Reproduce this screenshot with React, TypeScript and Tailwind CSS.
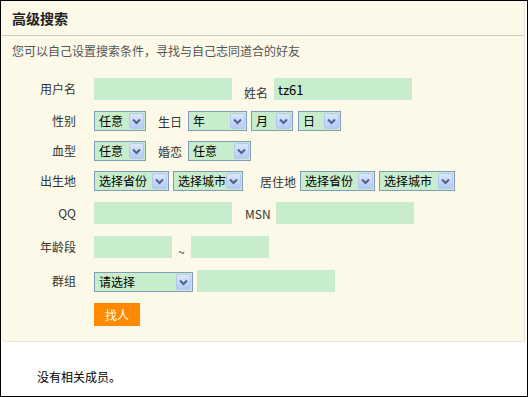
import React from "react";

const FONT = { fontFamily: '"Noto Sans CJK SC", "Liberation Sans", sans-serif' };

function Arrow() {
  return (
    <div className="w-[15px] h-[16px] mr-[1px] rounded-[2px] border border-[#b7c8ef] bg-gradient-to-b from-[#dbe6fd] to-[#b6caf5] flex items-center justify-center">
      <svg width="9" height="7" viewBox="0 0 9 7">
        <path d="M1 1.5 L4.5 5 L8 1.5" fill="none" stroke="#4d6185" strokeWidth="2" />
      </svg>
    </div>
  );
}

function Select({ label, w }: { label: string; w: string }) {
  return (
    <div className={`${w} h-[20px] border border-[#7f9db9] bg-[#c7edcc] flex items-center`}>
      <span className="flex-1 pl-[4px] text-[12px] leading-none text-black whitespace-nowrap">{label}</span>
      <Arrow />
    </div>
  );
}

function Field({ w, value }: { w: string; value?: string }) {
  return (
    <div className={`${w} h-[22px] bg-[#c7edcc] flex items-center pl-[4px] text-[13px] leading-none text-black`}>
      {value}
    </div>
  );
}

function Row({ label, cls, children }: { label: string; cls: string; children: React.ReactNode }) {
  return (
    <div className={`flex items-center ${cls}`}>
      <div className="w-[75px] text-right text-[12px] leading-none text-[#333]">{label}</div>
      <div className="ml-[18px] flex items-center h-full">{children}</div>
    </div>
  );
}

export default function App() {
  return (
    <div style={FONT} className="w-[528px] h-[397px] border border-black bg-white overflow-hidden">
      <div className="w-[524px] h-[341px] bg-[#fcf9e8] border-r border-b border-[#e8e4d0] rounded-bl-[6px] flex flex-col">
        <div className="h-[35px] shrink-0 border-b border-[#cfcbbb] pl-[11px] flex items-center">
          <span className="text-[14px] leading-none font-bold text-[#222]">高级搜索</span>
        </div>
        <div className="h-[42px] shrink-0 pl-[11px] pt-[9px] text-[12px] leading-none text-[#555]">
          您可以自己设置搜索条件，寻找与自己志同道合的好友
        </div>

        <Row label="用户名" cls="h-[22px] shrink-0">
          <Field w="w-[138px]" />
          <span className="ml-[12px] mr-[6px] text-[12px] leading-none text-[#333] mt-[7px]">姓名</span>
          <Field w="w-[138px]" value="tz61" />
        </Row>

        <Row label="性别" cls="h-[20px] mt-[11px] shrink-0">
          <Select label="任意" w="w-[52px]" />
          <span className="ml-[12px] mr-[6px] text-[12px] leading-none text-[#333] mt-[2px]">生日</span>
          <Select label="年" w="w-[59px]" />
          <div className="ml-[4px]"><Select label="月" w="w-[42px]" /></div>
          <div className="ml-[5px]"><Select label="日" w="w-[43px]" /></div>
        </Row>

        <Row label="血型" cls="h-[20px] mt-[10px] shrink-0">
          <Select label="任意" w="w-[52px]" />
          <span className="ml-[12px] mr-[6px] text-[12px] leading-none text-[#333] mt-[2px]">婚恋</span>
          <Select label="任意" w="w-[63px]" />
        </Row>

        <Row label="出生地" cls="h-[20px] mt-[10px] shrink-0">
          <Select label="选择省份" w="w-[75px]" />
          <div className="ml-[4px]"><Select label="选择城市" w="w-[70px]" /></div>
          <span className="ml-[17px] mr-[4px] text-[12px] leading-none text-[#333] mt-[2px]">居住地</span>
          <Select label="选择省份" w="w-[75px]" />
          <div className="ml-[4px]"><Select label="选择城市" w="w-[76px]" /></div>
        </Row>

        <Row label="QQ" cls="h-[22px] mt-[11px] shrink-0">
          <Field w="w-[138px]" />
          <span className="ml-[13px] mr-[5px] text-[12px] leading-none text-[#333] mt-[2px]">MSN</span>
          <Field w="w-[138px]" />
        </Row>

        <Row label="年龄段" cls="h-[22px] mt-[12px] shrink-0">
          <Field w="w-[78px]" />
          <span className="ml-[6px] mr-[6px] text-[12px] leading-none text-[#333] mt-[10px]">~</span>
          <Field w="w-[78px]" />
        </Row>

        <Row label="群组" cls="h-[22px] mt-[12px] shrink-0">
          <div className="mt-[2px]"><Select label="请选择" w="w-[99px]" /></div>
          <div className="ml-[4px]"><Field w="w-[138px]" /></div>
        </Row>

        <div className="ml-[93px] mt-[11px] w-[46px] h-[23px] shrink-0 bg-[#ff8a00] text-white text-[12px] leading-none flex items-center justify-center">
          找人
        </div>
      </div>

      <div className="pl-[36px] pt-[29px] text-[12px] leading-none text-black">没有相关成员。</div>
    </div>
  );
}
